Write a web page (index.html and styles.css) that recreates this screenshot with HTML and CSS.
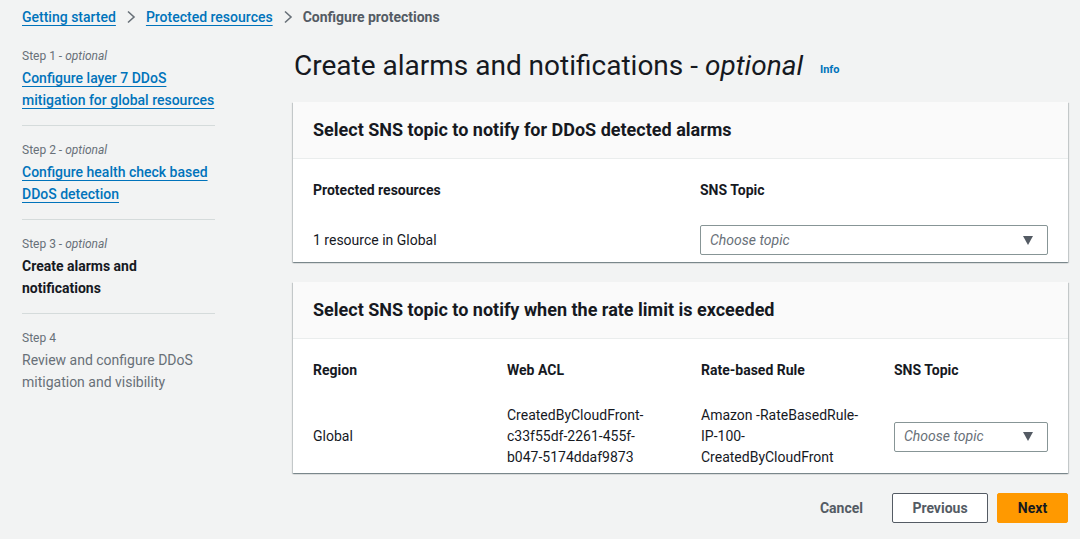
FILE: index.html
```html
<!DOCTYPE html>
<html lang="en">
<head>
<meta charset="utf-8">
<title>Configure protections</title>
<link rel="stylesheet" href="styles.css">
</head>
<body>
<div class="page">
  <nav class="breadcrumbs">
    <a href="#" class="crumb-link">Getting started</a>
    <svg class="crumb-sep" width="10" height="14" viewBox="0 0 10 14"><path d="M2 1.5 L8 7 L2 12.5" fill="none" stroke="#687078" stroke-width="1.6"/></svg>
    <a href="#" class="crumb-link">Protected resources</a>
    <svg class="crumb-sep" width="10" height="14" viewBox="0 0 10 14"><path d="M2 1.5 L8 7 L2 12.5" fill="none" stroke="#687078" stroke-width="1.6"/></svg>
    <span class="crumb-current">Configure protections</span>
  </nav>
  <div class="layout">
    <aside class="steps">
      <div class="step">
        <div class="step-label">Step 1 - <i>optional</i></div>
        <a href="#" class="step-link">Configure layer 7 DDoS<br>mitigation for global resources</a>
      </div>
      <div class="step">
        <div class="step-label">Step 2 - <i>optional</i></div>
        <a href="#" class="step-link">Configure health check based<br>DDoS detection</a>
      </div>
      <div class="step">
        <div class="step-label">Step 3 - <i>optional</i></div>
        <div class="step-current">Create alarms and<br>notifications</div>
      </div>
      <div class="step last">
        <div class="step-label">Step 4</div>
        <div class="step-disabled">Review and configure DDoS<br>mitigation and visibility</div>
      </div>
    </aside>
    <main class="main">
      <h1 class="title">Create alarms and notifications - <i>optional</i> <a href="#" class="info">Info</a></h1>
      <section class="panel">
        <header class="panel-header"><h2>Select SNS topic to notify for DDoS detected alarms</h2></header>
        <div class="panel-body grid-two">
          <div class="th">Protected resources</div>
          <div class="th">SNS Topic</div>
          <div class="td">1 resource in Global</div>
          <div class="td sel-cell"><div class="select"><span>Choose topic</span><span class="caret"></span></div></div>
        </div>
      </section>
      <section class="panel">
        <header class="panel-header"><h2>Select SNS topic to notify when the rate limit is exceeded</h2></header>
        <div class="panel-body grid-four">
          <div class="th">Region</div>
          <div class="th">Web ACL</div>
          <div class="th">Rate-based Rule</div>
          <div class="th">SNS Topic</div>
          <div class="td">Global</div>
          <div class="td">CreatedByCloudFront-<br>c33f55df-2261-455f-<br>b047-5174ddaf9873</div>
          <div class="td">Amazon -RateBasedRule-<br>IP-100-<br>CreatedByCloudFront</div>
          <div class="td"><div class="select"><span>Choose topic</span><span class="caret"></span></div></div>
        </div>
      </section>
      <div class="actions">
        <button class="btn btn-link">Cancel</button>
        <button class="btn btn-normal">Previous</button>
        <button class="btn btn-primary">Next</button>
      </div>
    </main>
  </div>
</div>
</body>
</html>
```

FILE: styles.css
```css
* { box-sizing: border-box; }
html, body { margin: 0; padding: 0; }
body {
  background: #f2f3f3;
  font-family: Roboto, "Liberation Sans", sans-serif;
  font-size: 14px;
  line-height: 21px;
  color: #16191f;
}
.page { padding: 6px 12px 0 22px; }
.breadcrumbs {
  display: flex;
  align-items: center;
  gap: 10px;
  height: 22px;
  font-weight: 500;
}
.crumb-link { color: #0073bb; text-decoration: underline; text-underline-offset: 3px; }
.crumb-sep { display: block; }
.crumb-current { color: #545b64; font-weight: 700; }
.layout {
  display: grid;
  grid-template-columns: 193px 1fr;
  column-gap: 78px;
  margin-top: 20px;
}
.step {
  padding: 0 0 14px;
  margin-bottom: 16px;
  border-bottom: 1px solid #d5dbdb;
}
.step.last { border-bottom: none; }
.step-label {
  font-size: 12px;
  line-height: 16px;
  color: #687078;
  margin-bottom: 3px;
}
.step-link, .step-current, .step-disabled {
  display: block;
  line-height: 22px;
  white-space: nowrap;
}
.step-link { color: #0073bb; font-weight: 500; text-decoration: underline; text-underline-offset: 3px; }
.step-current { color: #16191f; font-weight: 700; }
.step-disabled { color: #687078; font-weight: 400; }
.main { min-width: 0; }
.title {
  margin: 0 0 14px 1px;
  font-size: 28px;
  line-height: 36px;
  font-weight: 400;
  color: #16191f;
}
.info {
  font-size: 11px;
  font-weight: 700;
  color: #0073bb;
  text-decoration: none;
  vertical-align: 2px;
  margin-left: 10px;
}
.panel {
  background: #fff;
  box-shadow: 0 1px 1px 0 rgba(0,28,36,.3), 1px 1px 1px 0 rgba(0,28,36,.15), -1px 1px 1px 0 rgba(0,28,36,.15);
  margin-bottom: 20px;
}
.panel-header {
  background: #fafafa;
  border-bottom: 1px solid #eaeded;
  padding: 17px 20px 17px;
}
.panel-header h2 {
  margin: 0;
  font-size: 18px;
  line-height: 22px;
  font-weight: 700;
}
.panel-body {
  display: grid;
  align-items: center;
  padding: 20px 20px 7px;
  row-gap: 24px;
}
.grid-two { grid-template-columns: 387px 1fr; }
.grid-four { grid-template-columns: 194px 194px 193px 1fr; row-gap: 24px; padding-bottom: 5px; }
.th { font-weight: 700; line-height: 22px; }
.td { line-height: 21px; }
.select {
  display: flex;
  align-items: center;
  justify-content: space-between;
  height: 30px;
  border: 1px solid #879596;
  border-radius: 2px;
  padding: 0 14px 0 9px;
  color: #687078;
  font-style: italic;
}
.caret {
  width: 0; height: 0;
  border-left: 5px solid transparent;
  border-right: 5px solid transparent;
  border-top: 9px solid #545b64;
}
.actions {
  display: flex;
  justify-content: flex-end;
  gap: 9px;
  margin-top: 1px;
}
.btn {
  font-family: inherit;
  font-size: 14px;
  font-weight: 700;
  line-height: 21px;
  height: 30px;
  padding: 3px 19px;
  border-radius: 2px;
  border: 1px solid transparent;
  cursor: pointer;
}
.btn-link { background: transparent; color: #545b64; }
.btn-normal { background: #fff; border-color: #545b64; color: #545b64; width: 96px; }
.btn-primary { background: #ff9900; border-color: #ff9900; color: #16191f; width: 71px; }
```
